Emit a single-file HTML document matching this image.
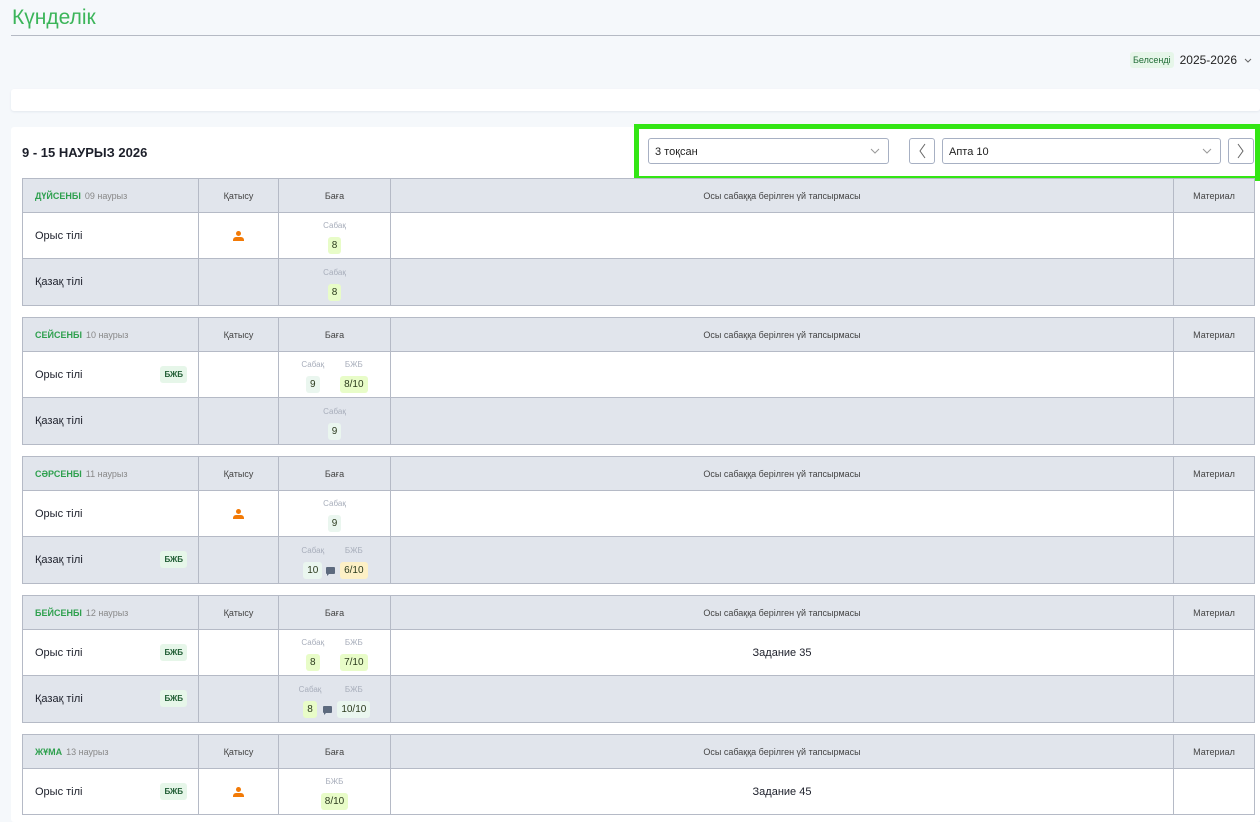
<!DOCTYPE html>
<html><head><meta charset="utf-8"><style>
*{box-sizing:border-box;margin:0;padding:0}
body{width:1260px;height:822px;overflow:hidden;background:#f5f8fb;font-family:"Liberation Sans","DejaVu Sans",sans-serif;position:relative;color:#222}
.title{position:absolute;left:12px;top:6px;font-size:21px;color:#3cb55a}
.hr{position:absolute;left:11px;right:0;top:35px;border-top:1px solid #b5bac4}
.yr{position:absolute;right:8px;top:52px;display:flex;align-items:center;font-size:12px;color:#222}
.bel{background:#e6f6e9;color:#1f6b35;font-size:9px;padding:3px 3px;border-radius:3px;margin-right:6px}
.bar{position:absolute;left:11px;right:0;top:89px;height:22px;background:#fff;border-radius:3px;box-shadow:0 1px 2px #e3e8ee}
.card{position:absolute;left:11px;right:0;top:127px;bottom:0;background:#fff;border-radius:3px}
.wk{position:absolute;left:22px;top:145px;font-size:13px;font-weight:bold;color:#1c1f2a}
.frame{position:absolute;left:634px;top:124px;width:626px;height:57px;border:5px solid #33e614;background:#fff}
.sel{position:absolute;top:138px;height:26px;border:1px solid #a7b0c3;border-radius:3px;background:#fff;font-size:11px;padding:7px 6px;color:#222}
.btn{position:absolute;top:138px;width:26px;height:26px;border:1px solid #a7b0c3;border-radius:3px;background:#fff}
.chev{position:absolute;right:8px;top:9px}
table{position:absolute;left:22px;width:1232px;border-collapse:collapse;table-layout:fixed}
td{border:1px solid #b5bac6;font-size:11px;vertical-align:middle}
tr.h td{background:#e1e5ec;height:34px;font-size:9px;color:#444;text-align:center}
tr.h td.d{text-align:left;padding-left:12px}
.dn{color:#2ea04e;font-weight:bold;font-size:9px;margin-right:4px}
.dd{color:#888;font-size:9px}
tr.w td{background:#fff;height:46px}
tr.g td{background:#e1e5ec;height:47px}
td.s{padding-left:12px;font-size:11px;color:#1c1f2a;position:relative}
.bj{position:absolute;right:11px;top:50%;margin-top:-9px;background:#e6f6e9;color:#1f5c33;font-size:8px;font-weight:bold;padding:4px 4px;border-radius:3px}
.gr{display:flex;justify-content:center;gap:16px;margin-top:4px}
.gc{display:flex;flex-direction:column;align-items:center}
.lb{font-size:8px;color:#a8aebb;height:12px}
.bd{font-size:10px;padding:3px 4px;border-radius:3px;margin-top:4px;color:#2b3a1d;position:relative}
.l{background:#e8fcc8}.m{background:#eaf6ef}.y{background:#fdf0c6}
.cm{position:absolute;left:-14px;top:5px;width:9px;height:7px;background:#5d6a7e;border-radius:1px}
.cm:after{content:"";position:absolute;left:1px;bottom:-2px;border:2px solid transparent;border-top-color:#5d6a7e;border-left-color:#5d6a7e}
.p{display:block;margin:0 auto;width:11px;height:10px;position:relative}
.p:before{content:"";position:absolute;left:3px;top:0;width:5px;height:5px;border-radius:50%;background:#f27a07}
.p:after{content:"";position:absolute;left:0;top:6px;width:11px;height:4px;border-radius:3px 3px 0 0;background:#f27a07}
.hw{text-align:center;font-size:11px;color:#1c1f2a}
</style></head><body>
<div class="title">Күнделік</div><div class="hr"></div>
<div class="yr"><span class="bel">Белсенді</span>2025-2026<svg width="8" height="5" style="margin-left:7px" viewBox="0 0 8 5"><path d="M1 1l3 3 3-3" stroke="#666" fill="none"/></svg></div>
<div class="bar"></div>
<div class="card"></div>
<div class="wk">9 - 15 НАУРЫЗ 2026</div>
<div class="frame"></div>
<div class="sel" style="left:648px;width:241px">3 тоқсан<svg class="chev" width="10" height="6" viewBox="0 0 10 6"><path d="M1 1l4 4 4-4" stroke="#999" fill="none"/></svg></div>
<div class="btn" style="left:909px"><svg width="24" height="24" viewBox="0 0 24 24"><path d="M15 5l-5 7 5 7" stroke="#666" fill="none"/></svg></div>
<div class="sel" style="left:942px;width:279px">Апта 10<svg class="chev" width="10" height="6" viewBox="0 0 10 6"><path d="M1 1l4 4 4-4" stroke="#999" fill="none"/></svg></div>
<div class="btn" style="left:1228px"><svg width="24" height="24" viewBox="0 0 24 24"><path d="M9 5l5 7-5 7" stroke="#666" fill="none"/></svg></div>

<table style="top:178px"><colgroup><col style="width:176px"><col style="width:80px"><col style="width:112px"><col style="width:783px"><col style="width:81px"></colgroup>
<tr class="h"><td class="d"><span class="dn">ДҮЙСЕНБІ</span><span class="dd">09 наурыз</span></td><td>Қатысу</td><td>Баға</td><td>Осы сабаққа берілген үй тапсырмасы</td><td>Материал</td></tr>
<tr class="w"><td class="s">Орыс тілі</td><td><span class="p"></span></td><td><div class="gr"><div class="gc"><span class="lb">Сабақ</span><span class="bd l">8</span></div></div></td><td></td><td></td></tr>
<tr class="g"><td class="s">Қазақ тілі</td><td></td><td><div class="gr"><div class="gc"><span class="lb">Сабақ</span><span class="bd l">8</span></div></div></td><td></td><td></td></tr>
</table>

<table style="top:317px"><colgroup><col style="width:176px"><col style="width:80px"><col style="width:112px"><col style="width:783px"><col style="width:81px"></colgroup>
<tr class="h"><td class="d"><span class="dn">СЕЙСЕНБІ</span><span class="dd">10 наурыз</span></td><td>Қатысу</td><td>Баға</td><td>Осы сабаққа берілген үй тапсырмасы</td><td>Материал</td></tr>
<tr class="w"><td class="s">Орыс тілі<span class="bj">БЖБ</span></td><td></td><td><div class="gr"><div class="gc"><span class="lb">Сабақ</span><span class="bd m">9</span></div><div class="gc"><span class="lb">БЖБ</span><span class="bd l">8/10</span></div></div></td><td></td><td></td></tr>
<tr class="g"><td class="s">Қазақ тілі</td><td></td><td><div class="gr"><div class="gc"><span class="lb">Сабақ</span><span class="bd m">9</span></div></div></td><td></td><td></td></tr>
</table>

<table style="top:456px"><colgroup><col style="width:176px"><col style="width:80px"><col style="width:112px"><col style="width:783px"><col style="width:81px"></colgroup>
<tr class="h"><td class="d"><span class="dn">СӘРСЕНБІ</span><span class="dd">11 наурыз</span></td><td>Қатысу</td><td>Баға</td><td>Осы сабаққа берілген үй тапсырмасы</td><td>Материал</td></tr>
<tr class="w"><td class="s">Орыс тілі</td><td><span class="p"></span></td><td><div class="gr"><div class="gc"><span class="lb">Сабақ</span><span class="bd m">9</span></div></div></td><td></td><td></td></tr>
<tr class="g"><td class="s">Қазақ тілі<span class="bj">БЖБ</span></td><td></td><td><div class="gr"><div class="gc"><span class="lb">Сабақ</span><span class="bd m">10</span></div><div class="gc"><span class="lb">БЖБ</span><span class="bd y"><i class="cm"></i>6/10</span></div></div></td><td></td><td></td></tr>
</table>

<table style="top:595px"><colgroup><col style="width:176px"><col style="width:80px"><col style="width:112px"><col style="width:783px"><col style="width:81px"></colgroup>
<tr class="h"><td class="d"><span class="dn">БЕЙСЕНБІ</span><span class="dd">12 наурыз</span></td><td>Қатысу</td><td>Баға</td><td>Осы сабаққа берілген үй тапсырмасы</td><td>Материал</td></tr>
<tr class="w"><td class="s">Орыс тілі<span class="bj">БЖБ</span></td><td></td><td><div class="gr"><div class="gc"><span class="lb">Сабақ</span><span class="bd l">8</span></div><div class="gc"><span class="lb">БЖБ</span><span class="bd l">7/10</span></div></div></td><td class="hw">Задание 35</td><td></td></tr>
<tr class="g"><td class="s">Қазақ тілі<span class="bj">БЖБ</span></td><td></td><td><div class="gr"><div class="gc"><span class="lb">Сабақ</span><span class="bd l">8</span></div><div class="gc"><span class="lb">БЖБ</span><span class="bd m"><i class="cm"></i>10/10</span></div></div></td><td></td><td></td></tr>
</table>

<table style="top:734px"><colgroup><col style="width:176px"><col style="width:80px"><col style="width:112px"><col style="width:783px"><col style="width:81px"></colgroup>
<tr class="h"><td class="d"><span class="dn">ЖҰМА</span><span class="dd">13 наурыз</span></td><td>Қатысу</td><td>Баға</td><td>Осы сабаққа берілген үй тапсырмасы</td><td>Материал</td></tr>
<tr class="w"><td class="s">Орыс тілі<span class="bj">БЖБ</span></td><td><span class="p"></span></td><td><div class="gr"><div class="gc"><span class="lb">БЖБ</span><span class="bd l">8/10</span></div></div></td><td class="hw">Задание 45</td><td></td></tr>
</table>
</body></html>
